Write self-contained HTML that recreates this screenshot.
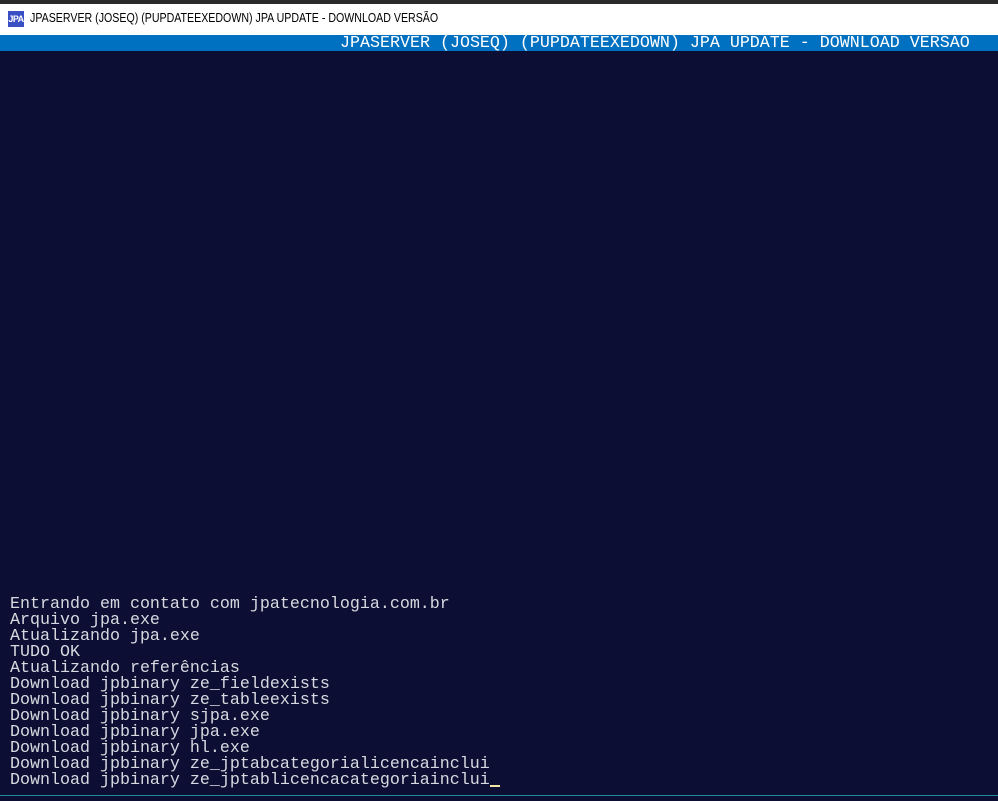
<!DOCTYPE html>
<html><head><meta charset="utf-8"><style>
html,body{margin:0;padding:0;width:998px;height:801px;overflow:hidden;background:#0c0f33;}
#top{position:absolute;left:0;top:0;width:998px;height:4px;background:#2a2a2a;}
#title{position:absolute;left:0;top:4px;width:998px;height:31px;background:#fff;}
#icon{position:absolute;left:8px;top:11px;width:16px;height:16px;background:#3a4fc4;color:#fff;font:bold 9px "Liberation Sans",sans-serif;line-height:16px;text-align:center;letter-spacing:-0.5px;}
#ttext{position:absolute;left:30px;top:11px;font:12.5px "Liberation Sans",sans-serif;color:#000;white-space:nowrap;transform:scaleX(0.85);transform-origin:0 0;}
#bar{position:absolute;left:0;top:35px;width:998px;height:16px;background:#0070c0;}
.m{font-family:"Liberation Mono",monospace;font-size:16.67px;line-height:16px;color:#e8e8e8;white-space:pre;position:absolute;}
#btext{left:340px;top:36px;color:#fff;}
#out{left:10px;top:597px;color:#d8d8e0;}
#cur{position:absolute;left:490px;top:785px;width:10px;height:2px;background:#f0e6a0;}
#line{position:absolute;left:0;top:795px;width:998px;height:1px;background:#1f8a99;}
</style></head><body>
<div id="top"></div>
<div id="title"></div>
<div id="icon">JPA</div>
<div id="ttext">JPASERVER (JOSEQ) (PUPDATEEXEDOWN) JPA UPDATE - DOWNLOAD VERSÃO</div>
<div id="bar"></div>
<div class="m" id="btext">JPASERVER (JOSEQ) (PUPDATEEXEDOWN) JPA UPDATE - DOWNLOAD VERSÃO</div>
<div class="m" id="out">Entrando em contato com jpatecnologia.com.br
Arquivo jpa.exe
Atualizando jpa.exe
TUDO OK
Atualizando referências
Download jpbinary ze_fieldexists
Download jpbinary ze_tableexists
Download jpbinary sjpa.exe
Download jpbinary jpa.exe
Download jpbinary hl.exe
Download jpbinary ze_jptabcategorialicencainclui
Download jpbinary ze_jptablicencacategoriainclui</div>
<div id="cur"></div>
<div id="line"></div>
</body></html>
